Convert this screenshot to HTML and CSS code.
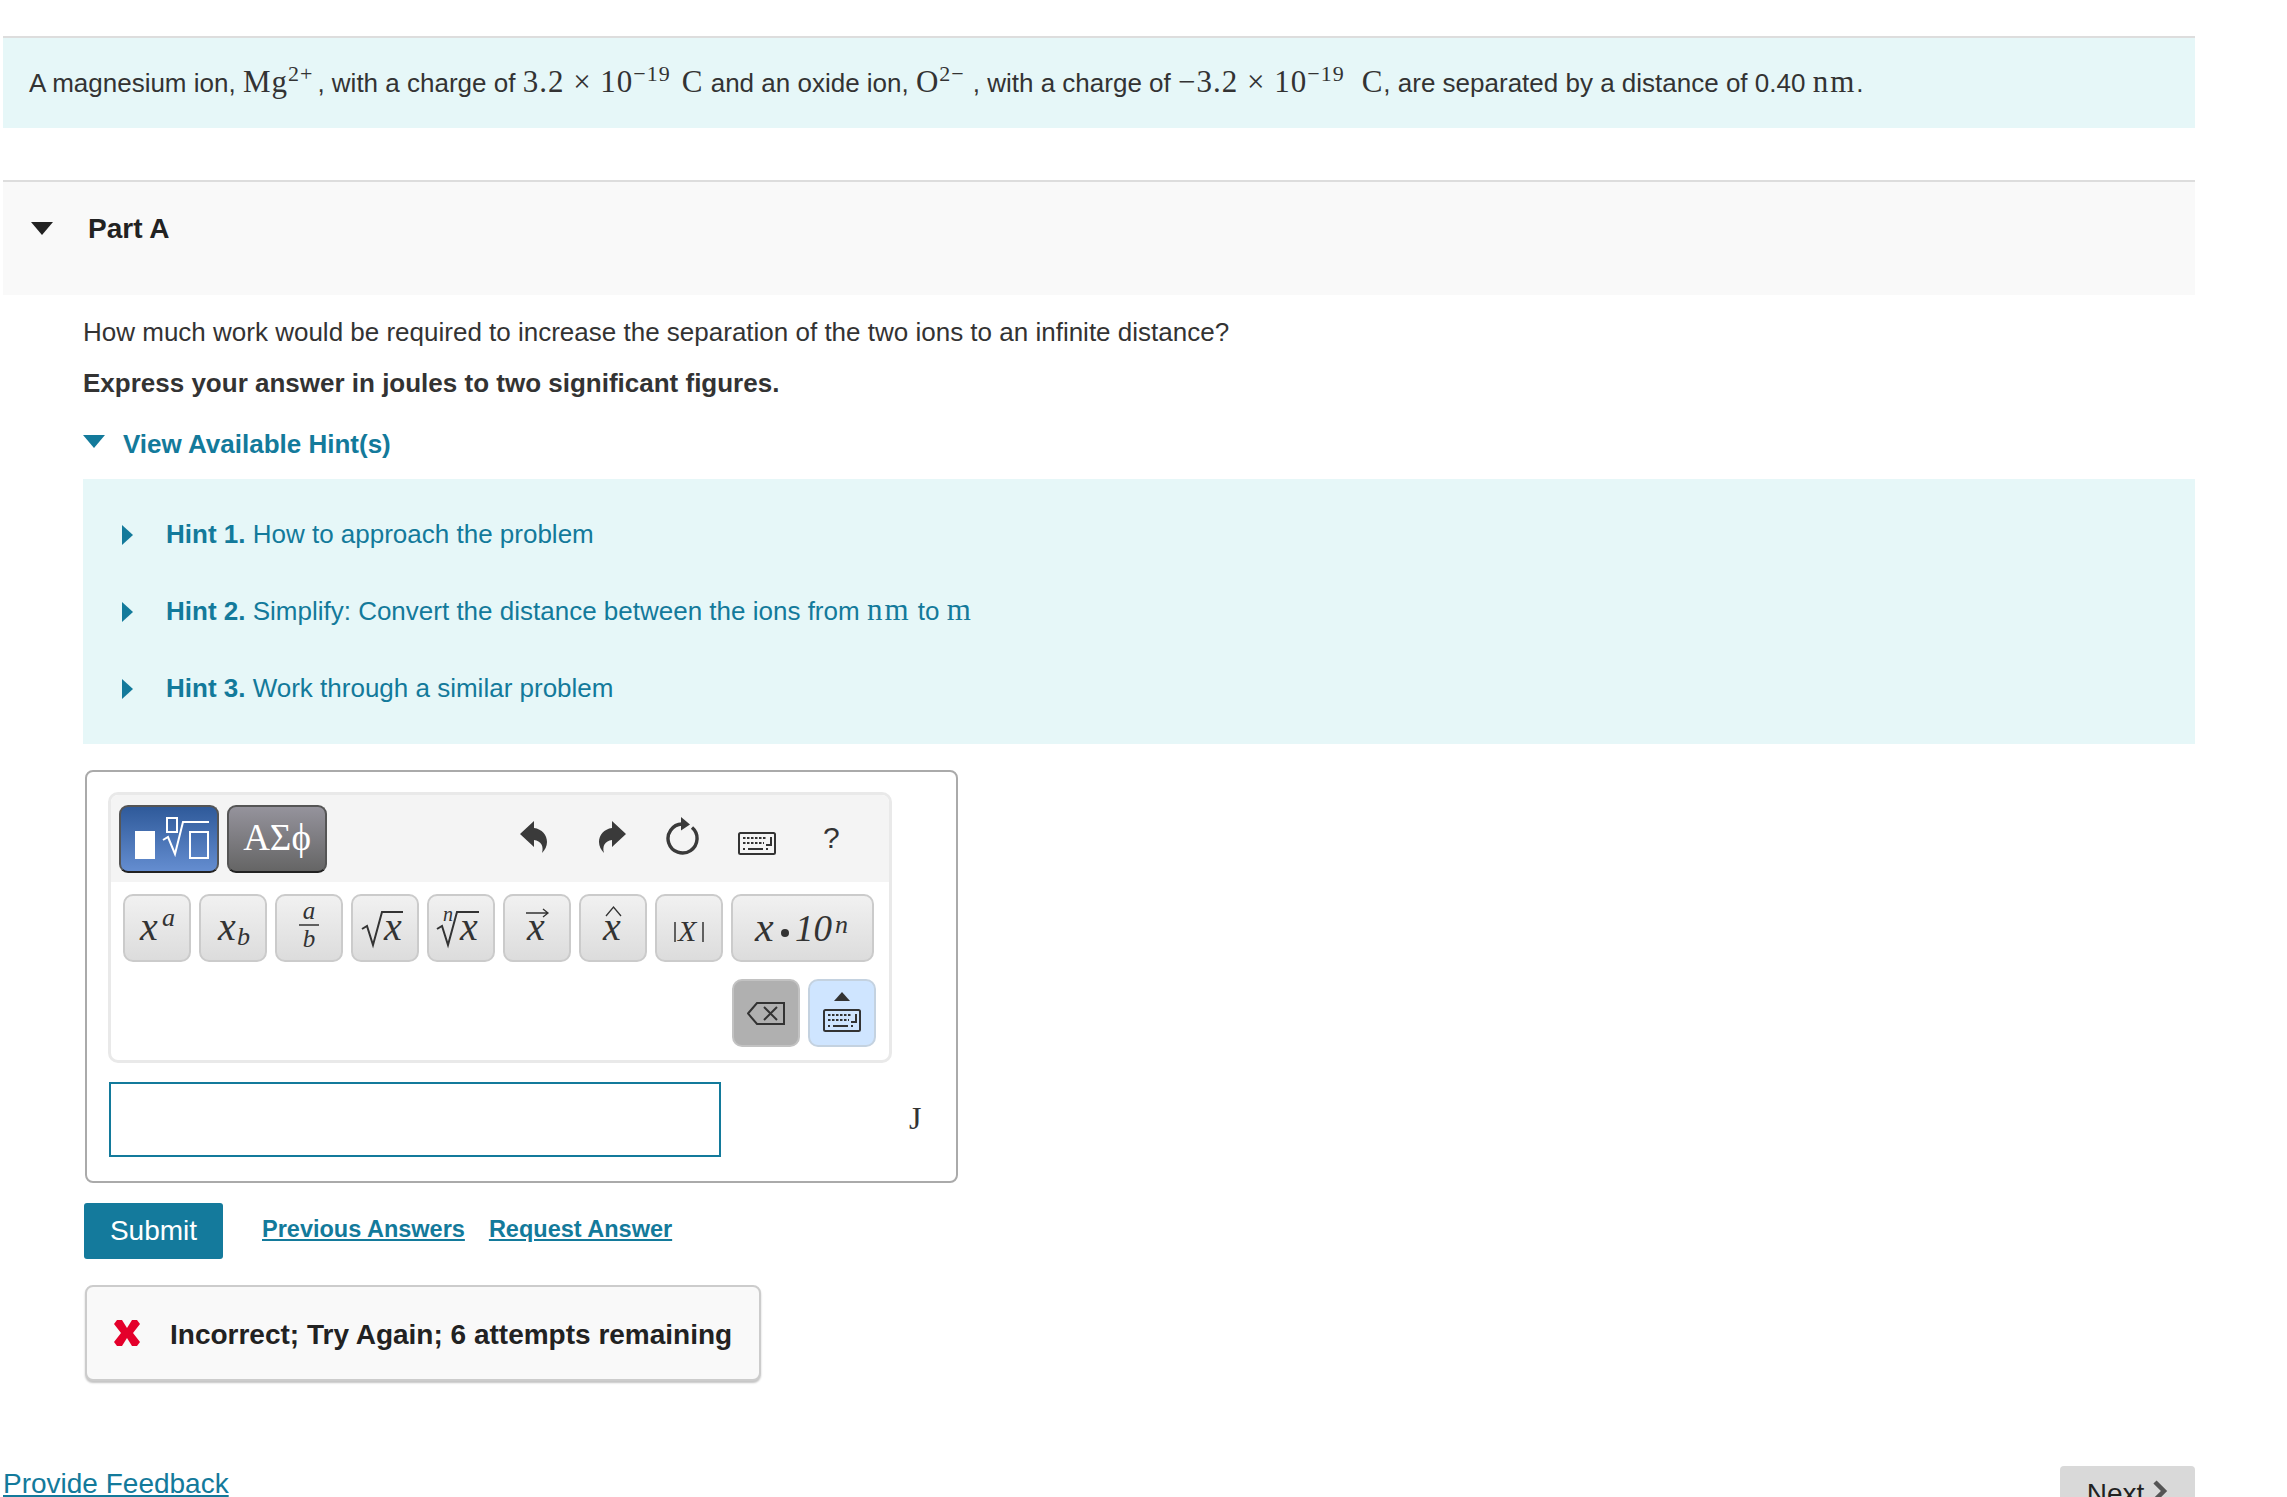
FILE: index.html
```html
<!DOCTYPE html>
<html lang="en">
<head>
    <meta charset="UTF-8">
    <meta name="viewport" content="width=device-width, initial-scale=1.0">
    <title>Part A</title>
    <link rel="stylesheet" href="styles.css">
</head>
<body>
    <svg class="defs" width="0" height="0">
        <symbol id="kbd" viewBox="0 0 38 23">
            <rect x="1" y="1" width="36" height="21" rx="1.5" fill="none" stroke="#333" stroke-width="2"/>
            <path d="M5 6h24M5 11h21M5 17h2M28 17h2" fill="none" stroke="#333" stroke-width="2" stroke-dasharray="2.500 1.500"/>
            <path d="M10 17h15" fill="none" stroke="#333" stroke-width="2"/>
            <path d="M33 5v8h-5" fill="none" stroke="#333" stroke-width="2"/>
        </symbol>
    </svg>

    <main class="page">
        <div class="statement">
            A magnesium ion, <span class="math">Mg<sup class="sup-mg">2+</sup></span>, with a charge of <span class="math">3.2 × 10<sup>−19</sup><span class="coulomb">C</span></span> and an oxide ion, <span class="math">O<sup class="sup-o">2−</sup></span>, with a charge of <span class="math">−3.2 × 10<sup class="sup-neg">−19</sup><span class="coulomb">C</span></span>, are separated by a distance of 0.40 <span class="math nm">nm</span>.
        </div>

        <div class="part-header">
            <span class="arrow-down dark"></span>
            <h2>Part A</h2>
        </div>

        <div class="part-body">
            <p class="question">How much work would be required to increase the separation of the two ions to an infinite distance?</p>
            <p class="instructions">Express your answer in joules to two significant figures.</p>

            <div class="hints-toggle">
                <span class="arrow-down"></span>
                <span>View Available Hint(s)</span>
            </div>

            <div class="hints">
                <div class="hint"><span class="arrow-right"></span><span><b>Hint 1.</b> How to approach the problem</span></div>
                <div class="hint"><span class="arrow-right"></span><span><b>Hint 2.</b> Simplify: Convert the distance between the ions from <span class="math nm">nm</span> to <span class="math nm">m</span></span></div>
                <div class="hint"><span class="arrow-right"></span><span><b>Hint 3.</b> Work through a similar problem</span></div>
            </div>

            <div class="answer-box">
                <div class="palette">
                    <div class="palette-head">
                        <button class="mode mode-blue">
                            <svg width="81" height="52" viewBox="0 0 81 52">
                                <rect x="6" y="18" width="20" height="28" fill="#fff"/>
                                <rect x="38" y="5" width="10" height="14" fill="none" stroke="#fff" stroke-width="2"/>
                                <path d="M34 27l5-3 7 17 8-32h26" fill="none" stroke="#fff" stroke-width="2"/>
                                <rect x="61" y="19" width="18" height="26" fill="none" stroke="#fff" stroke-width="2"/>
                            </svg>
                        </button>
                        <button class="mode mode-gray">ΑΣϕ</button>
                        <div class="tools">
                            <svg class="tool tool-undo" width="28" height="32" viewBox="0 0 28 32"><path d="M0 13L14 0v7c8 1 13 7 13 14 0 4-2 8-5 11 2-7-1-12-8-13v7z" fill="#3a3a3a"/></svg>
                            <svg class="tool tool-redo" width="28" height="32" viewBox="0 0 28 32"><path d="M28 13L14 0v7C6 8 1 14 1 21c0 4 2 8 5 11-2-7 1-12 8-13v7z" fill="#3a3a3a"/></svg>
                            <svg class="tool tool-reset" width="36" height="38" viewBox="0 0 36 38">
                                <path d="M26 10.500A14.500 14.500 0 1 1 16 7" fill="none" stroke="#3a3a3a" stroke-width="3.400"/>
                                <path d="M15 0l9 7.500-9 6z" fill="#3a3a3a"/>
                            </svg>
                            <svg class="tool tool-kbd" width="38" height="23"><use href="#kbd"/></svg>
                            <span class="tool tool-help">?</span>
                        </div>
                    </div>
                    <div class="palette-keys">
                        <div class="key-row">
                            <button class="key"><svg width="60" height="60" viewBox="0 0 60 60"><text class="mi" x="13" y="42" font-size="40">x</text><text class="mi" x="35" y="28" font-size="26">a</text></svg></button>
                            <button class="key"><svg width="60" height="60" viewBox="0 0 60 60"><text class="mi" x="15" y="42" font-size="40">x</text><text class="mi" x="34" y="47" font-size="26">b</text></svg></button>
                            <button class="key"><svg width="60" height="60" viewBox="0 0 60 60"><text class="mi" x="30" y="21" font-size="25" text-anchor="middle">a</text><path d="M20 27h20" stroke="#333" stroke-width="1.500"/><text class="mi" x="30" y="49" font-size="25" text-anchor="middle">b</text></svg></button>
                            <button class="key"><svg width="60" height="60" viewBox="0 0 60 60"><path d="M7 31l5-3 6 19 9-33h21" fill="none" stroke="#333" stroke-width="2"/><text class="mi" x="29" y="42" font-size="40">x</text></svg></button>
                            <button class="key"><svg width="60" height="60" viewBox="0 0 60 60"><text class="mi" x="12" y="23" font-size="20">n</text><path d="M6 31l5-3 6 19 9-33h22" fill="none" stroke="#333" stroke-width="2"/><text class="mi" x="29" y="42" font-size="40">x</text></svg></button>
                            <button class="key"><svg width="60" height="60" viewBox="0 0 60 60"><path d="M19 15h22M36 11l5 4-5 4" fill="none" stroke="#333" stroke-width="1.300"/><text class="mi" x="20" y="42" font-size="40">x</text></svg></button>
                            <button class="key"><svg width="60" height="60" viewBox="0 0 60 60"><path d="M23 18l7.500-9 7.500 9" fill="none" stroke="#333" stroke-width="1.300"/><text class="mi" x="20" y="42" font-size="40">x</text></svg></button>
                            <button class="key"><svg width="60" height="60" viewBox="0 0 60 60"><path d="M16 24v20M44 24v20" stroke="#333" stroke-width="1.500"/><text class="mi" x="19" y="43" font-size="30">X</text></svg></button>
                            <button class="key key-wide"><svg width="135" height="60" viewBox="0 0 135 60"><text class="mi" x="20" y="43" font-size="42">x</text><circle cx="50" cy="35" r="4" fill="#333"/><text class="mi" x="60" y="43" font-size="37">10</text><text class="mi" x="100" y="35" font-size="26">n</text></svg></button>
                        </div>
                        <div class="key-row key-row-end">
                            <button class="key key-back">
                                <svg width="38" height="23" viewBox="0 0 38 23"><path d="M1 11.500L10 1h27v21H10z" fill="none" stroke="#333" stroke-width="2"/><path d="M17 5l13 13M30 5L17 18" stroke="#333" stroke-width="2"/></svg>
                            </button>
                            <button class="key key-hide">
                                <svg width="38" height="42" viewBox="0 0 38 42"><path d="M11 9l8-9 8 9z" fill="#333"/><use href="#kbd" x="0" y="17" width="38" height="23"/></svg>
                            </button>
                        </div>
                    </div>
                </div>
                <div class="answer-row">
                    <div class="answer-input"></div>
                    <span class="unit">J</span>
                </div>
            </div>

            <div class="actions">
                <button class="submit">Submit</button>
                <a href="#" class="action-link">Previous Answers</a>
                <a href="#" class="action-link">Request Answer</a>
            </div>

            <div class="feedback">
                <svg width="26" height="26" viewBox="0 0 26 26"><path d="M3 0h5l5 8 5-8h5l3 4-7 9 7 9-3 4h-5l-5-8-5 8H3l-3-4 7-9-7-9z" fill="#e4002b"/></svg>
                <span>Incorrect; Try Again; 6 attempts remaining</span>
            </div>
        </div>

        <div class="footer">
            <a href="#" class="provide">Provide Feedback</a>
            <button class="next"><span>Next</span><svg width="16" height="24" viewBox="0 0 16 24"><path d="M3 3l9 9-9 9" fill="none" stroke="#555" stroke-width="4.500"/></svg></button>
        </div>
    </main>
</body>
</html>
```

FILE: styles.css
```css
html, body {
    margin: 0;
    height: 1497px;
    overflow: hidden;
    background: #fff;
}

body {
    font-family: "Liberation Sans", Arial, sans-serif;
    font-size: 26px;
    color: #333;
}

.defs {
    position: absolute;
}

button {
    font-family: inherit;
    padding: 0;
}

.page {
    width: 2192px;
    margin-left: 3px;
    padding-top: 36px;
}

.math {
    font-family: "Liberation Serif", serif;
    font-size: 31px;
    letter-spacing: 1px;
    line-height: 0;
}

.math.nm {
    letter-spacing: 2px;
}

.math sup {
    font-size: 22px;
    line-height: 0;
    vertical-align: 11px;
}

.math .sup-mg {
    margin-right: 4px;
}

.math .sup-o {
    margin-right: 8px;
}

.math .sup-neg {
    margin-right: 6px;
}

.coulomb {
    margin-left: 11px;
}

.statement {
    border-top: 2px solid #ddd;
    background: #e6f7f8;
    height: 90px;
    line-height: 90px;
    padding-left: 26px;
    white-space: nowrap;
}

.part-header {
    margin-top: 52px;
    border-top: 2px solid #ddd;
    background: #f9f9f9;
    height: 113px;
    display: flex;
    align-items: flex-start;
    padding-left: 28px;
}

.part-header h2 {
    margin: 28px 0 0 35px;
    font-size: 28px;
    line-height: 38px;
    color: #222;
}

.arrow-down {
    width: 0;
    height: 0;
    border-left: 11px solid transparent;
    border-right: 11px solid transparent;
    border-top: 13px solid #137a9b;
}

.arrow-down.dark {
    border-top-color: #222;
    margin-top: 40px;
}

.arrow-right {
    width: 0;
    height: 0;
    border-top: 10px solid transparent;
    border-bottom: 10px solid transparent;
    border-left: 11px solid #137a9b;
}

.part-body {
    padding-left: 80px;
}

.question {
    margin: 19px 0 0;
    line-height: 36px;
}

.instructions {
    margin: 15px 0 0;
    line-height: 36px;
    font-weight: bold;
}

.hints-toggle {
    margin-top: 25px;
    height: 36px;
    display: flex;
    align-items: center;
    gap: 18px;
    color: #137a9b;
    font-weight: bold;
}

.hints-toggle .arrow-down {
    margin-bottom: 6px;
}

.hints {
    margin-top: 17px;
    background: #e6f7f8;
    color: #137a9b;
    height: 265px;
    padding: 17px 0 0 39px;
    box-sizing: border-box;
}

.hint {
    height: 77px;
    display: flex;
    align-items: center;
    gap: 33px;
}

.answer-box {
    margin: 26px 0 0 2px;
    width: 873px;
    height: 413px;
    box-sizing: border-box;
    border: 2px solid #aaa;
    border-radius: 8px;
    padding: 20px 0 0 21px;
}

.palette {
    width: 784px;
    height: 271px;
    box-sizing: border-box;
    border: 3px solid #e9e9e9;
    border-radius: 10px;
    overflow: hidden;
}

.palette-head {
    height: 87px;
    background: #f4f4f4;
    display: flex;
    align-items: flex-start;
    padding: 10px 0 0 8px;
    box-sizing: border-box;
    gap: 8px;
}

.mode {
    width: 100px;
    height: 68px;
    border: 2px solid #555;
    border-bottom-color: #222;
    border-radius: 9px;
    box-sizing: border-box;
    color: #fff;
    display: flex;
    align-items: center;
    justify-content: center;
}

.mode-blue {
    background: linear-gradient(#2f5a9a, #648dd0);
}

.mode-gray {
    background: linear-gradient(#95939c, #656565);
    font-family: "Liberation Serif", serif;
    font-size: 37px;
    padding-bottom: 3px;
}

.tools {
    display: flex;
    align-items: flex-start;
}

.tool-undo {
    margin: 16px 0 0 185px;
}

.tool-redo {
    margin: 16px 0 0 50px;
}

.tool-reset {
    margin: 12px 0 0 40px;
}

.tool-kbd {
    margin: 27px 0 0 36px;
}

.tool-help {
    margin: 14px 0 0 47px;
    font-size: 30px;
    line-height: 38px;
}

.palette-keys {
    padding: 12px 13px 0 12px;
}

.key-row {
    display: flex;
    gap: 8px;
}

.key-row-end {
    justify-content: flex-end;
    margin-top: 17px;
}

.key {
    width: 68px;
    height: 68px;
    box-sizing: border-box;
    border: 2px solid #cbcbcb;
    border-radius: 10px;
    background: linear-gradient(#f1f1f1, #dcdcdc);
    display: flex;
    align-items: center;
    justify-content: center;
}

.key-wide {
    width: 143px;
}

.key-back {
    background: #b0b0b0;
    border-color: #c2c2c2;
}

.key-hide {
    background: #cfe5ff;
    border-color: #c4d2e0;
}

.mi {
    font-family: "Liberation Serif", serif;
    font-style: italic;
    fill: #333;
}

.answer-row {
    display: flex;
    align-items: center;
    margin-top: 19px;
}

.answer-input {
    width: 612px;
    height: 75px;
    margin-left: 1px;
    box-sizing: border-box;
    border: 2px solid #137a9b;
}

.unit {
    margin: 0 0 2px 188px;
    font-family: "Liberation Serif", serif;
    font-size: 32px;
}

.actions {
    margin: 20px 0 0 1px;
    display: flex;
    align-items: center;
}

.submit {
    width: 139px;
    height: 56px;
    border: none;
    border-radius: 3px;
    background: #147a9c;
    color: #fff;
    font-size: 28px;
    margin-right: 39px;
}

.action-link {
    color: #137a9b;
    font-weight: bold;
    font-size: 23.500px;
    margin-right: 24px;
    margin-bottom: 4px;
}

.feedback {
    margin: 26px 0 0 2px;
    width: 676px;
    height: 96px;
    box-sizing: border-box;
    border: 2px solid #ccc;
    border-radius: 8px;
    background: #f9f9f9;
    box-shadow: 0 2px 2px #c4c4c4;
    display: flex;
    align-items: center;
    gap: 30px;
    padding: 3px 0 0 27px;
    font-weight: bold;
    font-size: 28px;
    color: #222;
}

.feedback svg {
    margin-top: -4px;
}

.footer {
    margin-top: 85px;
    display: flex;
    justify-content: space-between;
    align-items: flex-start;
}

.provide {
    color: #137a9b;
    font-size: 28px;
    line-height: 36px;
}

.next {
    width: 135px;
    height: 56px;
    border: none;
    border-radius: 4px;
    background: #d9d9d9;
    color: #222;
    font-size: 28px;
    line-height: 30px;
    display: flex;
    align-items: flex-start;
    justify-content: center;
    gap: 8px;
    padding-top: 13px;
    box-sizing: border-box;
}
```
